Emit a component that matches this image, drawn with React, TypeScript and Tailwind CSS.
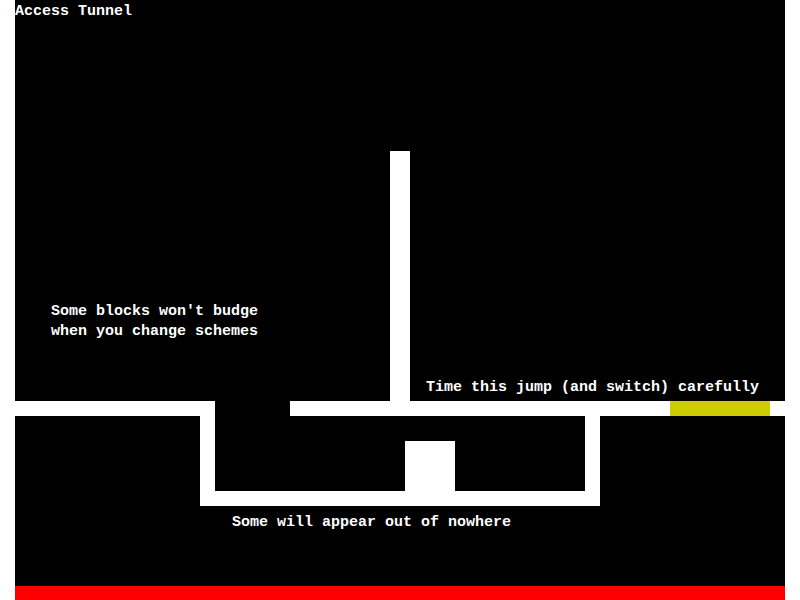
const mono = "font-['Liberation_Mono','Courier_New',monospace] font-bold text-[15px] leading-[20px] text-white";

// level geometry, in canvas coords (canvas starts at x=15)
const walls = [
  { x: 0, y: 401, w: 200, h: 15 },
  { x: 275, y: 401, w: 380, h: 15 },
  { x: 755, y: 401, w: 15, h: 15 },
  { x: 375, y: 151, w: 20, h: 250 },
  { x: 185, y: 416, w: 15, h: 90 },
  { x: 570, y: 416, w: 15, h: 90 },
  { x: 185, y: 491, w: 400, h: 15 },
  { x: 390, y: 441, w: 50, h: 50 },
];

export default function App() {
  return (
    <div className="w-[800px] h-[600px] bg-white flex justify-center">
      <div className="relative w-[770px] h-[600px] bg-black overflow-hidden">
        {walls.map((b, i) => (
          <div
            key={i}
            className="absolute bg-white"
            style={{ left: b.x, top: b.y, width: b.w, height: b.h }}
          />
        ))}
        {/* switch */}
        <div className="absolute left-[655px] top-[401px] w-[100px] h-[15px] bg-[#cccc00]" />
        {/* lava */}
        <div className="absolute left-0 bottom-0 w-full h-[14px] bg-[#ff0000]" />

        <p className={`absolute left-0 top-[2px] ${mono}`}>Access Tunnel</p>
        <p className={`absolute left-[36px] top-[302px] ${mono}`}>
          Some blocks won't budge
          <br />
          when you change schemes
        </p>
        <p className={`absolute left-[411px] top-[378px] ${mono}`}>Time this jump (and switch) carefully</p>
        <p className={`absolute left-[217px] top-[513px] ${mono}`}>Some will appear out of nowhere</p>
      </div>
    </div>
  );
}
